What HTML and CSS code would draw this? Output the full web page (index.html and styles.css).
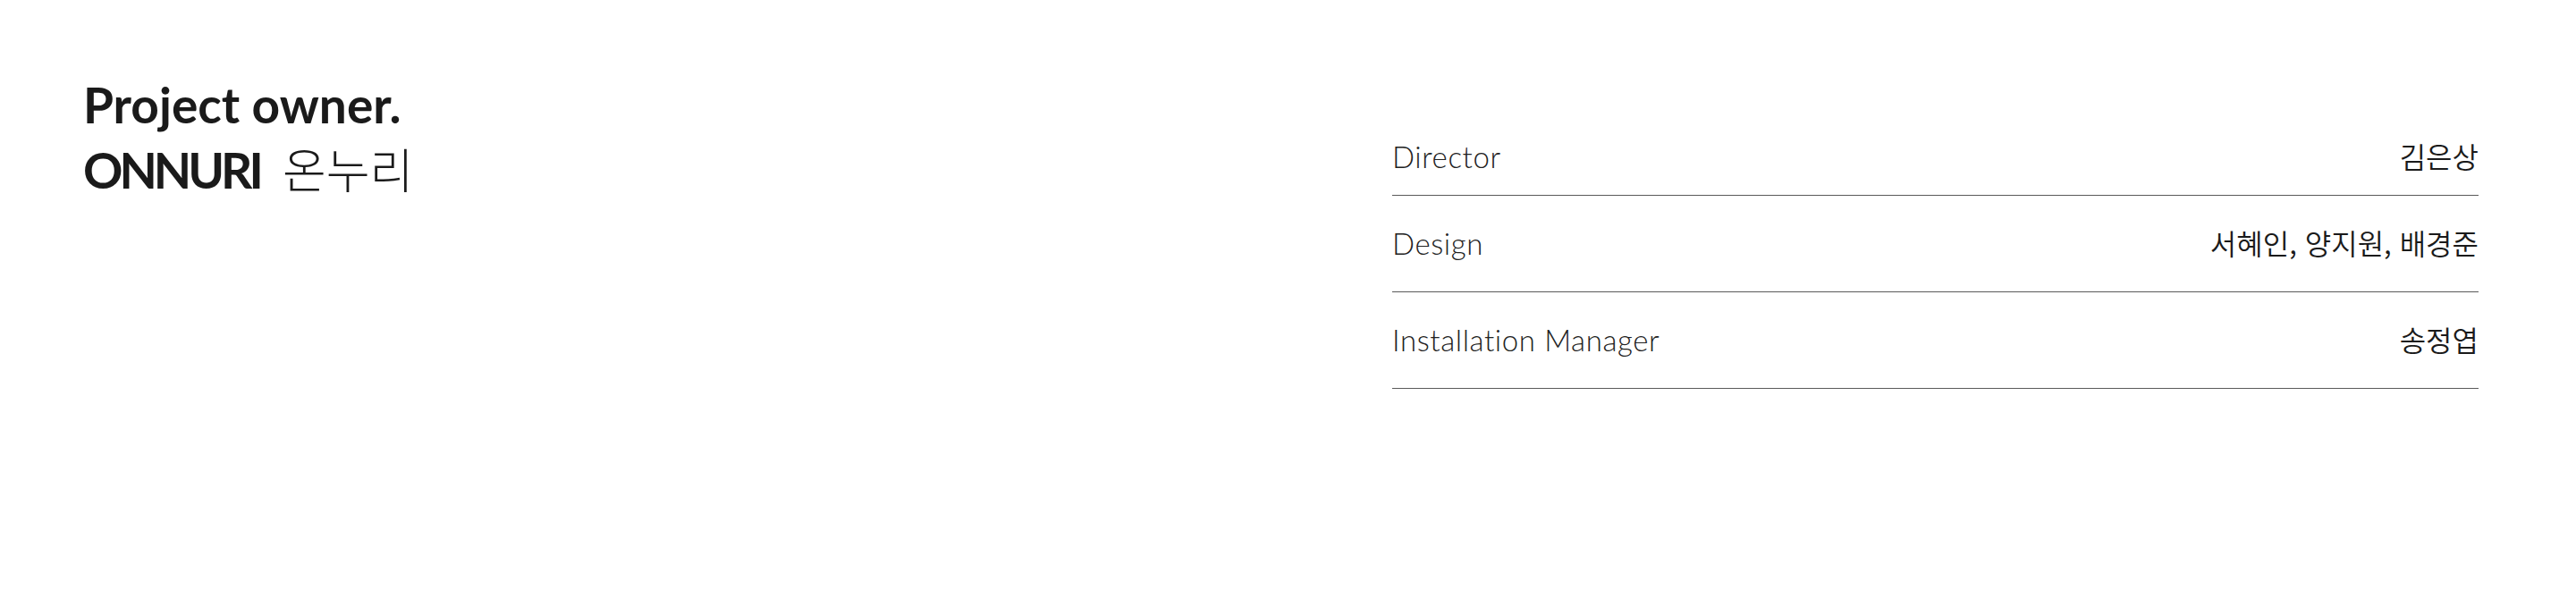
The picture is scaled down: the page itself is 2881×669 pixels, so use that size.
FILE: index.html
```html
<!DOCTYPE html>
<html lang="ko">
<head>
<meta charset="utf-8">
<title>Project owner</title>
<link rel="stylesheet" href="styles.css">
</head>
<body>
<section class="project">
  <div class="owner">
    <h2 class="owner__label">Project owner.</h2>
    <p class="owner__name"><span class="owner__en">ONNURI</span> <span class="owner__ko">온누리</span></p>
  </div>
  <dl class="credits">
    <div class="credit">
      <dt class="credit__role">Director</dt>
      <dd class="credit__names">김은상</dd>
    </div>
    <div class="credit">
      <dt class="credit__role">Design</dt>
      <dd class="credit__names">서혜인, 양지원, 배경준</dd>
    </div>
    <div class="credit">
      <dt class="credit__role">Installation Manager</dt>
      <dd class="credit__names">송정엽</dd>
    </div>
  </dl>
</section>
</body>
</html>
```
FILE: styles.css
```css
* { box-sizing: border-box; }
html, body { margin: 0; padding: 0; background: #fff; }
body {
  font-family: Lato, "Noto Sans CJK KR", sans-serif;
  color: #1a1a1a;
}
.project {
  display: grid;
  grid-template-columns: 1464px 1fr;
  padding: 82px 109px 0 93px;
}
.owner__label,
.owner__name {
  margin: 0;
  font-size: 55px;
  line-height: 71px;
  font-weight: 700;
  color: #1a1a1a;
}
.owner__en {
  letter-spacing: -4px;
}
.owner__ko {
  font-family: "Noto Sans CJK KR", sans-serif;
  font-weight: 300;
  font-size: 53px;
  margin-left: 12px;
}
.credits {
  margin: 40px 0 0;
  padding: 0;
}
.credit {
  display: flex;
  justify-content: space-between;
  align-items: baseline;
  padding: 28px 0 30px;
  border-bottom: 1px solid #5a5a5a;
}
.credit:first-child { padding-bottom: 19px; }
.credit__role {
  font-family: Lato, sans-serif;
  font-weight: 300;
  font-size: 33px;
  letter-spacing: 0.6px;
  line-height: 48px;
  color: #222;
}
.credit__names {
  margin: 0;
  font-family: "Noto Sans CJK KR", sans-serif;
  font-weight: 350;
  font-size: 32px;
  line-height: 48px;
  color: #1a1a1a;
}
```
